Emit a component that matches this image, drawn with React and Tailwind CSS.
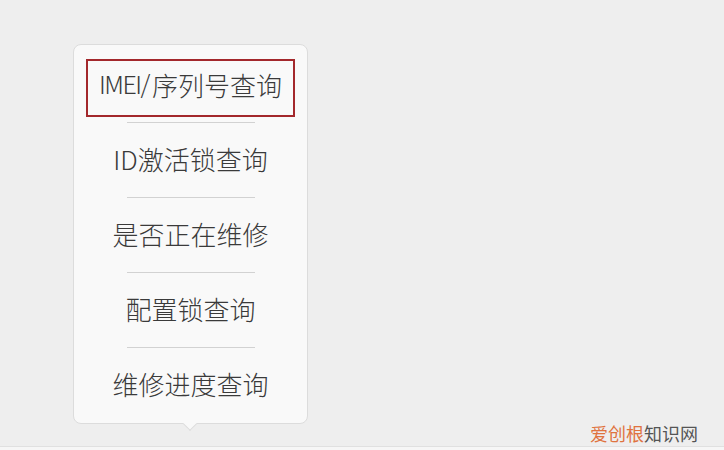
import React from 'react';

const items = ['ID激活锁查询', '是否正在维修', '配置锁查询', '维修进度查询'];

const font = { fontFamily: '"Noto Sans CJK SC", "Noto Sans", sans-serif' };

const Divider = () => <div className="mx-auto h-px w-[128px] bg-[#d2d2d2]" />;

export default function App() {
  return (
    <div className="relative flex h-[450px] w-[724px] flex-col overflow-hidden bg-[#eeeeee]" style={font}>
      <div className="flex-1 pl-[73px] pt-[44px]">
        <div className="relative h-[380px] w-[235px] rounded-lg border border-[#dcdcdc] bg-[#f9f9f9] py-[2px]">
          {/* first item, highlighted */}
          <div className="flex h-[75px] flex-col px-[12px] pt-[12px]">
            <div className="flex h-[58px] items-center justify-center border-2 border-[#a3282c] pb-[8px] text-[26px] font-light text-[#3a3a3a]">
              <span className="tracking-[-1.5px] text-[25px]">IMEI/</span>
              <span className="ml-[3px]">序列号查询</span>
            </div>
          </div>
          {items.map((t) => (
            <React.Fragment key={t}>
              <Divider />
              <div className="flex h-[74px] items-center justify-center pb-[4px] text-[26px] font-light text-[#3a3a3a]">{t}</div>
            </React.Fragment>
          ))}
          <div className="absolute -bottom-[6px] left-[111px] h-[10px] w-[10px] rotate-45 border-b border-r border-[#dcdcdc] bg-[#f9f9f9]" />
        </div>
      </div>
      <div className="h-px bg-[#e0e0e0]" />
      <div className="h-[3px] bg-[#f6f6f6]" />
      <div className="absolute bottom-[8px] right-[26px] text-[18px] leading-none">
        <span className="text-[#e0733f]">爱创根</span>
        <span className="text-[#555555]">知识网</span>
      </div>
    </div>
  );
}
